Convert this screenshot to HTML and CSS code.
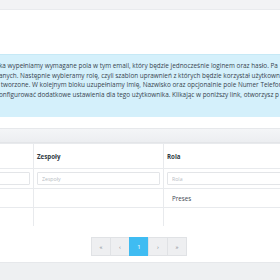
FILE: index.html
```html
<!DOCTYPE html>
<html lang="pl">
<head>
<meta charset="utf-8">
<link rel="stylesheet" href="styles.css">
</head>
<body>
<div class="page">
  <div class="topbar"></div>
  <div class="blank"></div>
  <div class="alert">
    <p class="alert-text">ka wypełniamy wymagane pola w tym email, który będzie jednocześnie loginem oraz hasło. Pa<br>anych. Następnie wybieramy rolę, czyli szablon uprawnień z których będzie korzystał użytkown<br>&nbsp;tworzone. W kolejnym bloku uzupełniamy Imię, Nazwisko oraz opcjonalnie pole Numer Telefon<br>onfigurować dodatkowe ustawienia dla tego użytkownika. Klikając w poniższy link, otworzysz p</p>
  </div>
  <div class="panel-head"></div>
  <div class="table-wrap">
    <table class="grid">
      <colgroup>
        <col class="c1"><col class="c2"><col class="c3">
      </colgroup>
      <thead>
        <tr class="head-row">
          <th></th>
          <th>Zespoły</th>
          <th>Rola</th>
        </tr>
        <tr class="filter-row">
          <td><input class="filter" type="text"></td>
          <td><input class="filter" type="text" placeholder="Zespoły"></td>
          <td><input class="filter" type="text" placeholder="Rola"></td>
        </tr>
      </thead>
      <tbody>
        <tr class="data-row">
          <td></td>
          <td></td>
          <td>Preses</td>
        </tr>
        <tr class="data-row">
          <td></td>
          <td></td>
          <td></td>
        </tr>
      </tbody>
    </table>
  </div>
  <nav class="pager">
    <span class="pg">«</span>
    <span class="pg">‹</span>
    <span class="pg active">1</span>
    <span class="pg">›</span>
    <span class="pg">»</span>
  </nav>
  <div class="footer"></div>
</div>
</body>
</html>
```
FILE: styles.css
```css
html, body {
  margin: 0;
  padding: 0;
  background: #ffffff;
  overflow: hidden;
}
.page {
  width: 280px;
  height: 280px;
  display: flex;
  flex-direction: column;
  font-family: "Open Sans", "Liberation Sans", sans-serif;
  color: #3b4650;
}
.topbar {
  height: 9px;
  background: #f2f3f5;
  border-bottom: 1px solid #e9ebee;
  flex: none;
}
.blank {
  height: 44px;
  flex: none;
}
.alert {
  height: 63px;
  flex: none;
  background: #d4f0fb;
  border-top: 1px solid #c6e9f6;
  box-sizing: border-box;
  overflow: hidden;
}
.alert-text {
  margin: 6px 0 0 -1px;
  font-size: 6.4px;
  line-height: 9.6px;
  white-space: nowrap;
  color: #37444f;
}
.panel-head {
  margin-top: 11px;
  height: 15px;
  flex: none;
  background: linear-gradient(#f4f5f7, #eceef1);
  border-top: 1px solid #e6e8eb;
  border-bottom: 1px solid #e3e5e8;
  box-sizing: border-box;
}
.table-wrap {
  flex: none;
  height: 83px;
  overflow: hidden;
}
.grid {
  border-collapse: collapse;
  table-layout: fixed;
  width: 400px;
  margin-left: -100px;
  font-size: 6.2px;
}
.c1 { width: 133px; }
.c2 { width: 130px; }
.c3 { width: 137px; }
.grid th, .grid td {
  border: 1px solid #e8eaed;
  padding: 0 3px;
  text-align: left;
  vertical-align: middle;
}
.grid th {
  height: 24px;
  font-weight: 700;
  color: #2f3a44;
}
.filter-row td {
  height: 19px;
  padding: 0 3px;
}
.filter {
  display: block;
  width: 100%;
  box-sizing: border-box;
  height: 13px;
  border: 1px solid #e3e5e8;
  border-radius: 1px;
  padding: 0 4px;
  font-family: inherit;
  font-size: 5.2px;
  color: #555;
  background: #fff;
}
.filter::placeholder {
  color: #b7bcc2;
}
.data-row td {
  height: 18px;
  color: #3e4852;
  padding-left: 8px;
}
.pager {
  margin-top: 11px;
  display: flex;
  justify-content: center;
  padding-right: 1px;
  flex: none;
}
.pg {
  width: 20px;
  height: 19px;
  box-sizing: border-box;
  display: flex;
  align-items: center;
  justify-content: center;
  background: #eeeff1;
  border: 1px solid #e0e2e5;
  margin-left: -1px;
  font-size: 6px;
  color: #7a828a;
}
.pg.active {
  background: #3fbcf2;
  border-color: #3fbcf2;
  color: #ffffff;
}
.footer {
  margin-top: 6px;
  flex: 1;
  background: #eef0f2;
  border-top: 1px solid #e6e8eb;
}
```
